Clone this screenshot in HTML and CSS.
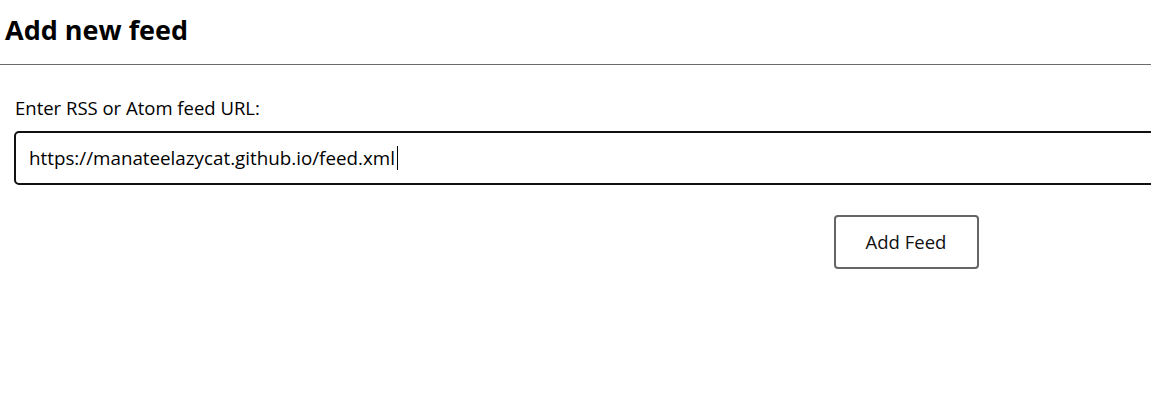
FILE: index.html
```html
<!DOCTYPE html>
<html lang="en">
<head>
    <meta charset="UTF-8">
    <title>Add new feed</title>
    <link rel="stylesheet" href="styles.css">
</head>
<body>
    <header class="page-header">
        <h2>Add new feed</h2>
    </header>

    <main class="feed-form">
        <label for="feedUrl">Enter RSS or Atom feed URL:</label>
        <div class="url-box">
            <span class="url-text">https://manateelazycat.github.io/feed.xml</span><span class="caret"></span>
        </div>
        <button type="submit" class="add-btn">Add Feed</button>
    </main>
</body>
</html>
```

FILE: styles.css
```css
html {
    overflow: hidden;
}
body {
    margin: 0;
    font-family: "Open Sans", "Noto Sans", sans-serif;
    color: #000;
    background: white;
}
.page-header {
    border-bottom: 1px solid #6b6b6b;
    padding: 11px 5px 15px;
}
.page-header h2 {
    margin: 0;
    font-size: 27px;
    font-weight: 700;
    line-height: 38px;
}
.feed-form {
    width: 1784px;
    margin-left: 14px;
    padding-top: 30px;
    display: flex;
    flex-direction: column;
}
.feed-form label {
    font-size: 18.5px;
    line-height: 25px;
    margin-left: 1px;
    margin-bottom: 11px;
}
.url-box {
    height: 50px;
    border: 2px solid #111;
    border-radius: 5px;
    display: flex;
    align-items: center;
    padding-left: 13px;
    font-size: 18.8px;
}
.caret {
    display: inline-block;
    width: 1px;
    height: 24px;
    background: #000;
    margin-left: 2px;
}
.add-btn {
    align-self: center;
    margin-top: 30px;
    width: 145px;
    height: 54px;
    background: white;
    border: 2px solid #666;
    border-radius: 4px;
    font-family: inherit;
    font-size: 18.5px;
    color: #111;
    padding-bottom: 2px;
}
```
